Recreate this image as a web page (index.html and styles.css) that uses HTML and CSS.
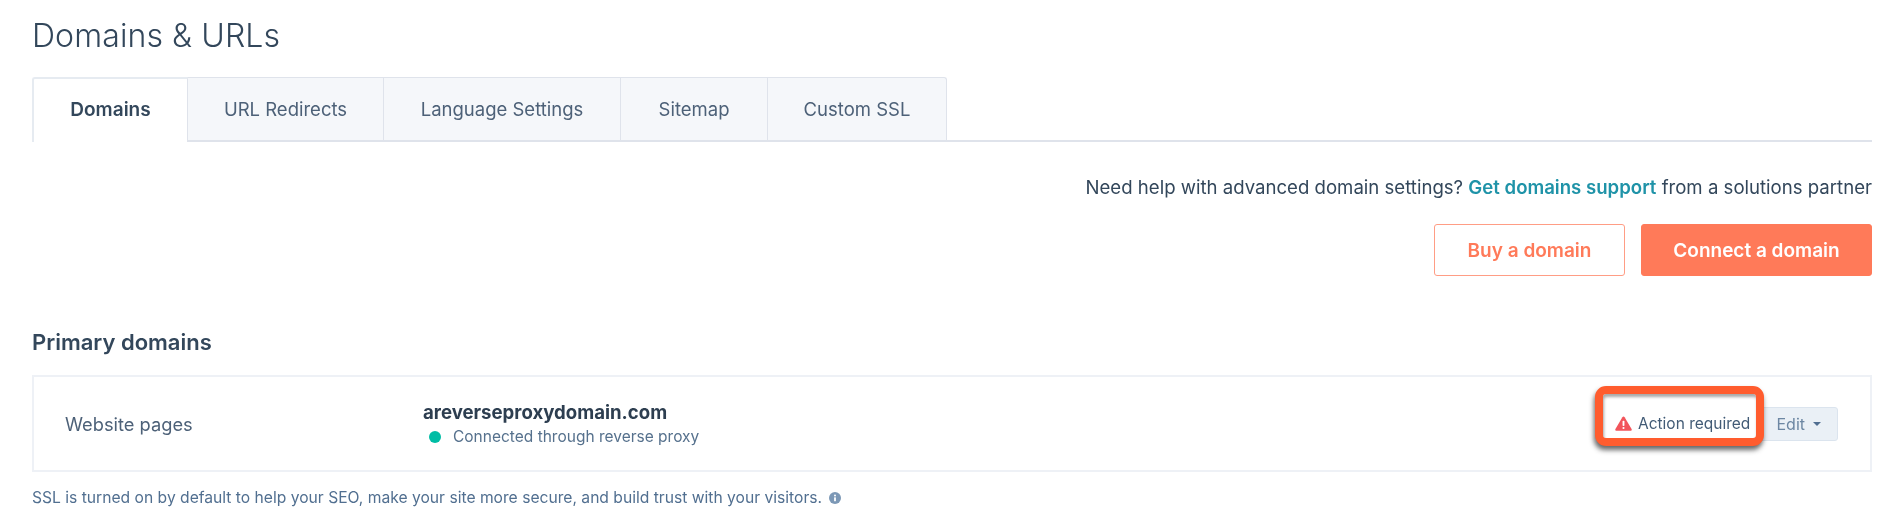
FILE: index.html
```html
<!DOCTYPE html>
<html lang="en">
<head>
<meta charset="utf-8">
<title>Domains &amp; URLs</title>
<link rel="stylesheet" href="styles.css">
</head>
<body>
<main class="page">
  <h1 class="title">Domains &amp; URLs</h1>
  <nav class="tabs">
    <a class="tab tab-active tab-domains">Domains</a>
    <a class="tab tab-redirects">URL Redirects</a>
    <a class="tab tab-language">Language Settings</a>
    <a class="tab tab-sitemap">Sitemap</a>
    <a class="tab tab-ssl">Custom SSL</a>
  </nav>
  <p class="help">Need help with advanced domain settings? <a class="help-link">Get domains support</a> from a solutions partner</p>
  <div class="actions">
    <button class="btn btn-outline">Buy a domain</button>
    <button class="btn btn-solid">Connect a domain</button>
  </div>
  <h2 class="section-title">Primary domains</h2>
  <section class="card">
    <div class="card-label">Website pages</div>
    <div class="card-domain">
      <div class="domain-name">areverseproxydomain.com</div>
      <div class="domain-status"><span class="dot"></span>Connected through reverse proxy</div>
    </div>
    <div class="card-actions">
      <div class="callout">
        <svg class="warn" viewBox="0 0 18 16" aria-hidden="true"><path d="M9 .6c.5 0 .9.3 1.2.7l7.4 12.6c.5.9-.1 1.9-1.1 1.9H1.5C.5 15.800-.1 14.800.4 13.900L7.800 1.300C8.100.9 8.500.6 9 .6z" fill="#f2545b"/><rect x="8" y="5" width="2" height="5.600" rx=".8" fill="#fff"/><circle cx="9" cy="12.800" r="1.150" fill="#fff"/></svg>
        <span>Action required</span>
      </div>
      <button class="edit">Edit<span class="caret"></span></button>
    </div>
  </section>
  <p class="note">SSL is turned on by default to help your SEO, make your site more secure, and build trust with your visitors.<svg class="info" viewBox="0 0 12 12" aria-hidden="true"><circle cx="6" cy="6" r="6" fill="#7c98b6"/><rect x="5.100" y="5.200" width="1.800" height="4" rx=".5" fill="#fff"/><circle cx="6" cy="3.500" r="1" fill="#fff"/></svg></p>
</main>
</body>
</html>
```
FILE: styles.css
```css
* { box-sizing: border-box; }
html, body { margin: 0; background: #fff; }
body { font-family: Inter, "Open Sans", "Liberation Sans", sans-serif; color: #33475b; }
.page { width: 1886px; height: 532px; padding: 0 14px 0 32px; overflow: hidden; filter: blur(0.65px); }
.title { margin: 0; padding-top: 16px; height: 77px; font-size: 32px; line-height: 40px; font-weight: 300; color: #33475b; letter-spacing: 0.1px; }
.tabs { display: flex; height: 65px; border-bottom: 2px solid #dfe3eb; }
.tab { display: flex; align-items: center; justify-content: center; height: 63px; background: #f5f7fa; border: 1px solid #dfe3eb; border-left: 0; border-bottom: 0; font-size: 18.500px; color: #4d6178; }
.tab-domains { width: 156px; }
.tab-redirects { width: 196px; }
.tab-language { width: 237px; }
.tab-sitemap { width: 147px; }
.tab-ssl { width: 179px; border-radius: 0 3px 0 0; }
.tab-active { background: #fff; border-left: 2px solid #e6ebf1; border-top: 2px solid #e6ebf1; height: 65px; margin-bottom: -2px; padding-bottom: 2px; font-size: 19px; font-weight: 600; color: #33475b; border-radius: 3px 0 0 0; }
.help { margin: 35px 0 0; text-align: right; font-size: 18.600px; line-height: 20px; color: #33475b; }
.help-link { font-weight: 600; color: #1f93a8; }
.actions { display: flex; justify-content: flex-end; gap: 16px; margin-top: 27px; }
.btn { height: 52px; border-radius: 3px; font-family: inherit; font-size: 19px; font-weight: 600; }
.btn-outline { width: 191px; background: #fff; border: 1px solid #ff9d85; color: #ff7a59; }
.btn-solid { width: 231px; background: #ff7a59; border: 1px solid #ff7a59; color: #fff; }
.section-title { margin: 53px 0 0; font-size: 22px; line-height: 26px; font-weight: 600; color: #33475b; }
.card { display: flex; align-items: center; height: 97px; margin: 20px 0 0; padding: 0 32px 0 31px; border: 2px solid #eef1f6; }
.card-label { width: 358px; font-size: 18.300px; color: #4d6178; }
.card-domain { flex: 1; }
.domain-name { font-size: 18.600px; line-height: 24px; font-weight: 700; color: #2d3e50; }
.domain-status { display: flex; align-items: center; margin-top: 3px; font-size: 15.500px; line-height: 20px; color: #56718d; }
.dot { width: 12px; height: 12px; margin: 0 12px 0 6px; border-radius: 50%; background: #00bda5; }
.card-actions { display: flex; align-items: center; }
.callout { position: relative; z-index: 1; display: flex; align-items: center; gap: 6px; width: 169px; height: 60px; margin: 0 -6px 15px 0; padding: 14px 0 0 12px; background: #fff; border: 8px solid #ff5c2e; border-radius: 11px; box-shadow: -1px 4px 5px rgba(40, 40, 40, .7), inset 1px 3px 3px rgba(40, 40, 40, .4); font-size: 15.500px; color: #425b76; white-space: nowrap; }
.warn { width: 17px; height: 15px; flex: none; }
.edit { display: flex; align-items: center; justify-content: flex-end; width: 80px; height: 34px; padding: 0 16px 0 0; background: #eaf0f6; border: 1px solid #dbe4ee; border-radius: 3px; font-family: inherit; font-size: 16px; color: #6d87a3; }
.caret { width: 0; height: 0; margin-left: 8px; border: 4px solid transparent; border-top-color: #506e91; border-bottom: 0; }
.note { display: flex; align-items: center; margin: 16px 0 0; font-size: 15.650px; line-height: 20px; color: #516f90; }
.info { width: 12px; height: 12px; margin-left: 7px; }
```
